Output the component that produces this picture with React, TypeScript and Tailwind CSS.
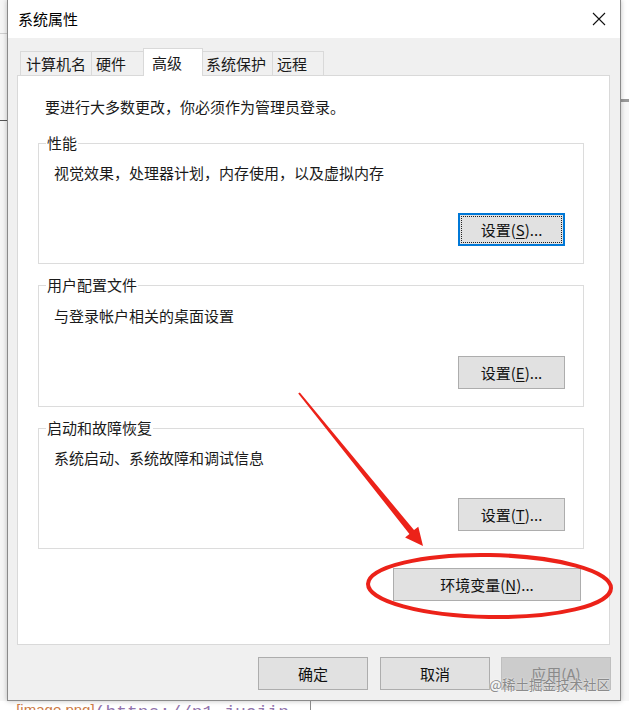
import React from "react";

function WinButton({
  children,
  className = "",
  focused = false,
  disabled = false,
}: {
  children: React.ReactNode;
  className?: string;
  focused?: boolean;
  disabled?: boolean;
}) {
  if (focused) {
    return (
      <div className={`h-[33px] border-2 border-[#0078d7] bg-[#e1e1e1] p-px flex ${className}`}>
        <div className="flex-1 flex items-center justify-center border border-dotted border-[#222] text-[#111]">
          {children}
        </div>
      </div>
    );
  }
  if (disabled) {
    return (
      <div className={`h-[33px] border border-[#bfbfbf] bg-[#cccccc] flex items-center justify-center text-[#8a8a8a] ${className}`}>
        {children}
      </div>
    );
  }
  return (
    <div className={`h-[33px] border border-[#adadad] bg-[#e1e1e1] flex items-center justify-center text-[#111] ${className}`}>
      {children}
    </div>
  );
}

function Group({
  label,
  text,
  button,
  focused = false,
  h,
  pt,
  mt,
}: {
  label: string;
  text: string;
  button: React.ReactNode;
  focused?: boolean;
  h: string;
  pt: string;
  mt: string;
}) {
  return (
    <div className={`relative ml-[20px] mr-[25px] border border-[#dcdcdc] flex flex-col ${h} ${pt} ${mt}`}>
      <span className="absolute left-[7px] top-[-11px] px-px bg-white">{label}</span>
      <div className="pl-[15px]">{text}</div>
      <div className="mt-[30px] flex justify-end pr-[18px]">
        <WinButton focused={focused} className="w-[107px]">
          {button}
        </WinButton>
      </div>
    </div>
  );
}

export default function App() {
  return (
    <div className="relative w-[629px] h-[710px] overflow-hidden bg-white [font-family:'Microsoft_YaHei','Noto_Sans_CJK_SC',sans-serif] text-[15px] leading-[20px] text-[#1a1a1a]">
      <div className="flex h-[701px]">
        {/* desktop strip left */}
        <div className="w-[7px] bg-[#f5f5f5] flex flex-col">
          <div className="h-[33px]" />
          <div className="h-px bg-[#cfcfcf]" />
          <div className="h-[86px]" />
          <div className="h-px bg-[#555]" />
          <div className="flex-1" />
        </div>

        {/* window */}
        <div className="relative w-[614px] flex flex-col border-x border-b border-[#8a8a8a] bg-[#f0f0f0] shadow-[0_0_5px_rgba(0,0,0,0.25)]">
          <div className="h-[38px] bg-white flex items-center justify-between pl-[10px] pr-[14px]">
            <span className="text-black">系统属性</span>
            <svg width="14" height="14" viewBox="0 0 14 14">
              <path d="M1 1 L13 13 M13 1 L1 13" stroke="#111" strokeWidth="1.1" fill="none" />
            </svg>
          </div>

          <div className="flex flex-col pt-[10px] pl-[9px] pr-[10px] pb-[10px]">
            {/* tabs */}
            <div className="h-[27px] flex items-end">
              <div className="ml-[3px] w-[72px] h-[24px] border-t border-x border-[#d9d9d9] bg-[#f0f0f0] pl-[5px] flex items-center">
                计算机名
              </div>
              <div className="-ml-px w-[54px] h-[24px] border-t border-x border-[#d9d9d9] bg-[#f0f0f0] pl-[4px] flex items-center">
                硬件
              </div>
              <div className="relative z-10 -ml-[2px] w-[60px] h-[28px] -mb-px border-t border-x border-[#d9d9d9] bg-white pl-[8px] flex items-center">
                高级
              </div>
              <div className="-ml-[2px] w-[72px] h-[24px] border-t border-x border-[#d9d9d9] bg-[#f0f0f0] pl-[4px] flex items-center">
                系统保护
              </div>
              <div className="-ml-px w-[52px] h-[24px] border-t border-x border-[#d9d9d9] bg-[#f0f0f0] pl-[4px] flex items-center">
                远程
              </div>
            </div>

            {/* panel */}
            <div className="h-[570px] border border-[#d9d9d9] bg-white flex flex-col">
              <div className="pl-[27px] pt-[21px]">要进行大多数更改，你必须作为管理员登录。</div>

              <Group
                label="性能"
                text="视觉效果，处理器计划，内存使用，以及虚拟内存"
                focused
                h="h-[121px]"
                pt="pt-[19px]"
                mt="mt-[26px]"
                button={
                  <span>
                    设置(<span className="underline underline-offset-2">S</span>)...
                  </span>
                }
              />
              <Group
                label="用户配置文件"
                text="与登录帐户相关的桌面设置"
                h="h-[122px]"
                pt="pt-[20px]"
                mt="mt-[21px]"
                button={
                  <span>
                    设置(<span className="underline underline-offset-2">E</span>)...
                  </span>
                }
              />
              <Group
                label="启动和故障恢复"
                text="系统启动、系统故障和调试信息"
                h="h-[121px]"
                pt="pt-[19px]"
                mt="mt-[21px]"
                button={
                  <span>
                    设置(<span className="underline underline-offset-2">T</span>)...
                  </span>
                }
              />

              <div className="mt-[19px] flex justify-end pr-[28px]">
                <WinButton className="w-[188px]">
                  <span>
                    环境变量(<span className="underline underline-offset-2">N</span>)...
                  </span>
                </WinButton>
              </div>
            </div>

            {/* dialog buttons */}
            <div className="mt-[12px] flex justify-end -mr-px">
              <WinButton className="w-[110px]">确定</WinButton>
              <WinButton className="w-[110px] ml-[12px]">取消</WinButton>
              <WinButton disabled className="w-[110px] ml-[11px]">
                应用(A)
              </WinButton>
            </div>
          </div>

          {/* watermark */}
          <div className="absolute right-[10px] bottom-[7px] text-[13.5px] leading-[18px] text-[rgba(125,125,125,0.9)] [text-shadow:0_0_2px_#fff]">
            @稀土掘金技术社区
          </div>
        </div>

        {/* desktop strip right */}
        <div className="flex-1 flex flex-col bg-[#f7f7f7]">
          <div className="h-[99px] bg-white" />
          <div className="h-[3px] bg-[#9a9a9a]" />
          <div className="flex-1" />
        </div>
      </div>

      {/* code text below window */}
      <div className="relative h-[9px] overflow-hidden">
        <div className="absolute left-[310px] top-0 h-full w-px bg-[#8a8a8a]" />
        <div className="w-[310px] overflow-hidden whitespace-nowrap pl-[9px] mt-[2px] leading-[18px]">
          <span className="text-[#777] [font-family:'Liberation_Mono',monospace] text-[12px]">·</span>
          <span className="relative -top-[3px] text-[#cc7a45] underline [font-family:'Liberation_Sans',sans-serif] text-[15px]">[image.png]</span>
          <span className="text-[#9274ad] [font-family:'Liberation_Mono',monospace] text-[18px]">(https://p1-juejin</span>
        </div>
      </div>

      {/* red annotation */}
      <svg className="absolute left-0 top-0 pointer-events-none" width="629" height="710" viewBox="0 0 629 710">
        <polygon
          points="299.8,392.4 414,530.1 418.3,526.7 423,546 405.1,537.4 409.4,533.9 298.2,393.6"
          fill="#ec2219"
        />
        <ellipse
          cx="489.5"
          cy="586"
          rx="121.5"
          ry="31"
          fill="none"
          stroke="#ec2219"
          strokeWidth="4"
          transform="rotate(1 489.5 586)"
        />
      </svg>
    </div>
  );
}
